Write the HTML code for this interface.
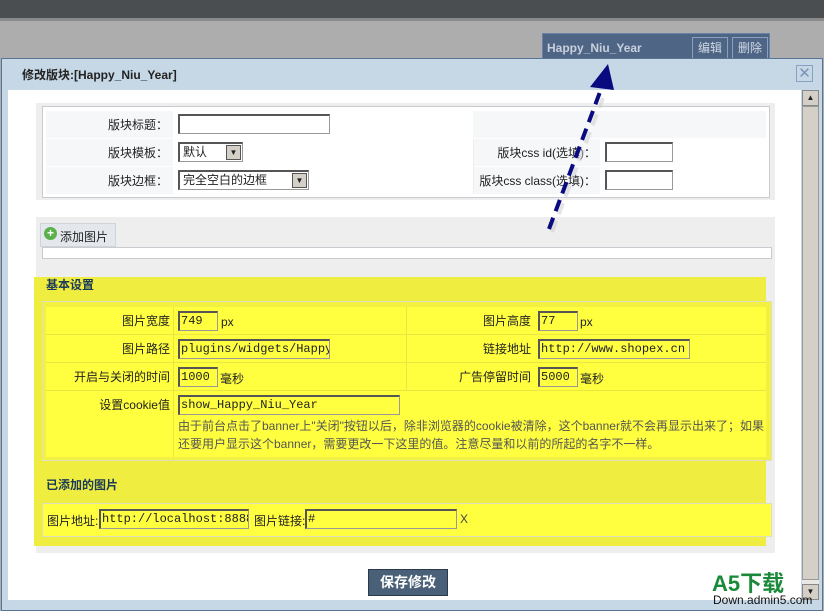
<!DOCTYPE html>
<html><head><meta charset="utf-8"><style>
*{margin:0;padding:0;box-sizing:border-box}
body{width:824px;height:611px;overflow:hidden;background:#adadad;font-family:"Liberation Sans","Noto Sans CJK SC",sans-serif;font-size:12px;color:#222;position:relative}
.a{position:absolute}
.inp{position:absolute;background:#fff;border:1px solid #999;border-top:2px solid #555;border-left:2px solid #555;font-family:"Liberation Mono","Noto Sans CJK SC",monospace;font-size:12px;line-height:16px;padding-left:1px;white-space:nowrap;overflow:hidden}
.yin{background:#ffff40}
.lbl{position:absolute;text-align:right;font-size:12px;line-height:14px}
.sel{position:absolute;background:#fff;border:1px solid #999;border-top:2px solid #555;border-left:2px solid #555;font-size:12px;line-height:16px;padding-left:3px}
.sel i{position:absolute;right:1px;top:1px;width:15px;height:15px;background:#d4d0c8;border:1px solid #555;font-style:normal;font-size:8px;text-align:center;line-height:13px}
</style></head><body>
<div class="a" style="left:0;top:0;width:824px;height:18px;background:#4a4e50"></div>
<div class="a" style="left:0;top:18px;width:824px;height:3px;background:#8a8a8a"></div>
<div class="a" style="left:542px;top:33px;width:228px;height:28px;background:#4e6585;border:1px solid #6a82a6"></div>
<div class="a" style="left:547px;top:41px;color:#c8d0dc;font-weight:bold;font-size:12px">Happy_Niu_Year</div>
<div class="a" style="left:692px;top:37px;width:36px;height:22px;border:1px solid #8aa0c0;color:#d0d8e4;text-align:center;line-height:20px">编辑</div>
<div class="a" style="left:732px;top:37px;width:36px;height:22px;border:1px solid #8aa0c0;color:#d0d8e4;text-align:center;line-height:20px">删除</div>
<div class="a" style="left:1px;top:58px;width:822px;height:553px;background:#c6d8e6;border:1px solid #5a7498"></div>
<div class="a" style="left:22px;top:66px;font-weight:bold;font-size:12px;color:#222">修改版块:[Happy_Niu_Year]</div>
<div class="a" style="left:796px;top:65px;width:17px;height:17px;border:1px solid #8aa0c0;color:#7a94b8;text-align:center;line-height:15px;font-size:15px">✕</div>
<div class="a" style="left:8px;top:90px;width:793px;height:510px;background:#fff"></div>
<div class="a" style="left:802px;top:90px;width:17px;height:510px;background:#eae8e4"></div>
<div class="a" style="left:802px;top:90px;width:17px;height:16px;background:#d4d0c8;border:1px solid #888;font-size:8px;text-align:center;line-height:14px">▲</div>
<div class="a" style="left:802px;top:106px;width:17px;height:474px;background:#d4d0c8;border:1px solid #999"></div>
<div class="a" style="left:802px;top:584px;width:17px;height:16px;background:#d4d0c8;border:1px solid #888;font-size:8px;text-align:center;line-height:14px">▼</div>
<div class="a" style="left:36px;top:103px;width:739px;height:97px;background:#eee"></div>
<div class="a" style="left:42px;top:106px;width:728px;height:92px;background:#fff;border:1px solid #c8ccd0"></div>
<div class="a" style="left:46px;top:111px;width:720px;height:83px;background:#f5f7f9"></div>
<div class="a" style="left:46px;top:138px;width:720px;height:1px;background:#fff"></div>
<div class="a" style="left:46px;top:166px;width:720px;height:1px;background:#fff"></div>
<div class="lbl" style="left:46px;top:118px;width:122px">版块标题：</div>
<div class="lbl" style="left:46px;top:146px;width:122px">版块模板：</div>
<div class="lbl" style="left:46px;top:174px;width:122px">版块边框：</div>
<div class="a" style="left:173px;top:111px;width:300px;height:83px;background:#fff"></div>
<div class="a" style="left:473px;top:139px;width:1px;height:55px;background:#eee"></div>
<div class="a" style="left:600px;top:139px;width:166px;height:55px;background:#fff"></div>
<div class="inp" style="left:178px;top:114px;width:152px;height:20px"></div>
<div class="sel" style="left:178px;top:142px;width:65px;height:20px">默认<i>▼</i></div>
<div class="sel" style="left:178px;top:170px;width:131px;height:20px">完全空白的边框<i>▼</i></div>
<div class="lbl" style="left:474px;top:146px;width:122px">版块css id(选填)：</div>
<div class="lbl" style="left:474px;top:174px;width:122px">版块css class(选填)：</div>
<div class="inp" style="left:605px;top:142px;width:68px;height:20px"></div>
<div class="inp" style="left:605px;top:170px;width:68px;height:20px"></div>
<div class="a" style="left:36px;top:217px;width:739px;height:336px;background:#eee"></div>
<div class="a" style="left:40px;top:223px;width:76px;height:24px;background:#e4e8ec;border:1px solid #d0d4d8"></div>
<div class="a" style="left:44px;top:227px;width:13px;height:13px;border-radius:50%;background:#5ab04a;color:#fff;font-size:12px;line-height:12px;text-align:center;font-weight:bold">+</div>
<div class="a" style="left:60px;top:228px;font-size:12px">添加图片</div>
<div class="a" style="left:42px;top:247px;width:730px;height:12px;background:#fff;border:1px solid #c8ccd0"></div>
<div class="a" style="left:34px;top:277px;width:732px;height:269px;background:#efed40"></div>
<div class="a" style="left:46px;top:276px;font-weight:bold;color:#1a3a5a;font-size:12px">基本设置</div>
<div class="a" style="left:42px;top:301px;width:730px;height:160px;border:1px solid #e0e0c0;background:#f2f040"></div>
<div class="a yin" style="left:46px;top:307px;width:720px;height:150px"></div>
<div class="a" style="left:173px;top:307px;width:1px;height:150px;background:#e8e640"></div>
<div class="a" style="left:406px;top:307px;width:1px;height:84px;background:#e8e640"></div>
<div class="a" style="left:46px;top:334px;width:720px;height:1px;background:#e8e640"></div>
<div class="a" style="left:46px;top:362px;width:720px;height:1px;background:#e8e640"></div>
<div class="a" style="left:46px;top:390px;width:720px;height:1px;background:#e8e640"></div>
<div class="lbl" style="left:46px;top:314px;width:124px">图片宽度</div>
<div class="lbl" style="left:46px;top:342px;width:124px">图片路径</div>
<div class="lbl" style="left:46px;top:370px;width:124px">开启与关闭的时间</div>
<div class="lbl" style="left:46px;top:398px;width:124px">设置cookie值</div>
<div class="inp yin" style="left:178px;top:311px;width:40px;height:20px">749</div><div class="a" style="left:221px;top:315px">px</div>
<div class="inp yin" style="left:178px;top:339px;width:152px;height:20px">plugins/widgets/Happy</div>
<div class="inp yin" style="left:178px;top:367px;width:40px;height:20px">1000</div><div class="a" style="left:220px;top:370px">毫秒</div>
<div class="inp yin" style="left:178px;top:395px;width:222px;height:20px">show_Happy_Niu_Year</div>
<div class="a" style="left:178px;top:417px;width:586px;font-size:12px;line-height:18px;color:#555">由于前台点击了banner上"关闭"按钮以后，除非浏览器的cookie被清除，这个banner就不会再显示出来了；如果还要用户显示这个banner，需要更改一下这里的值。注意尽量和以前的所起的名字不一样。</div>
<div class="lbl" style="left:407px;top:314px;width:124px">图片高度</div>
<div class="lbl" style="left:407px;top:342px;width:124px">链接地址</div>
<div class="lbl" style="left:407px;top:370px;width:124px">广告停留时间</div>
<div class="inp yin" style="left:538px;top:311px;width:40px;height:20px">77</div><div class="a" style="left:580px;top:315px">px</div>
<div class="inp yin" style="left:538px;top:339px;width:152px;height:20px">http://www.shopex.cn</div>
<div class="inp yin" style="left:538px;top:367px;width:40px;height:20px">5000</div><div class="a" style="left:580px;top:370px">毫秒</div>
<div class="a" style="left:46px;top:476px;font-weight:bold;color:#1a3a5a;font-size:12px">已添加的图片</div>
<div class="a" style="left:42px;top:503px;width:730px;height:34px;border:1px solid #e0e0c0;background:#ffff40"></div>
<div class="a" style="left:47px;top:512px">图片地址:</div>
<div class="inp yin" style="left:99px;top:509px;width:150px;height:20px">http://localhost:8888</div>
<div class="a" style="left:254px;top:512px">图片链接:</div>
<div class="inp yin" style="left:305px;top:509px;width:152px;height:20px">#</div>
<div class="a" style="left:460px;top:512px;color:#444">X</div>
<div class="a" style="left:368px;top:569px;width:80px;height:27px;background:#4a6078;border:1px solid #2a3848;color:#fff;font-weight:bold;font-size:14px;text-align:center;line-height:25px">保存修改</div>
<div class="a" style="left:712px;top:573px;font-weight:bold;font-size:22px;color:#1a8a3a;line-height:22px">A5下载</div>
<div class="a" style="left:713px;top:594px;font-size:12px;color:#111;line-height:13px">Down.admin5.com</div>
<svg class="a" style="left:0;top:0" width="824" height="611">
<line x1="549" y1="229" x2="600" y2="95" stroke="#ccc" stroke-width="4" stroke-dasharray="12,7" opacity=".5" transform="translate(3,3)"/>
<line x1="549" y1="229" x2="600" y2="92" stroke="#0a0a80" stroke-width="4" stroke-dasharray="12,7"/>
<polygon points="608,64 590,87 614,90" fill="#0a0a80"/>
</svg>
</body></html>
